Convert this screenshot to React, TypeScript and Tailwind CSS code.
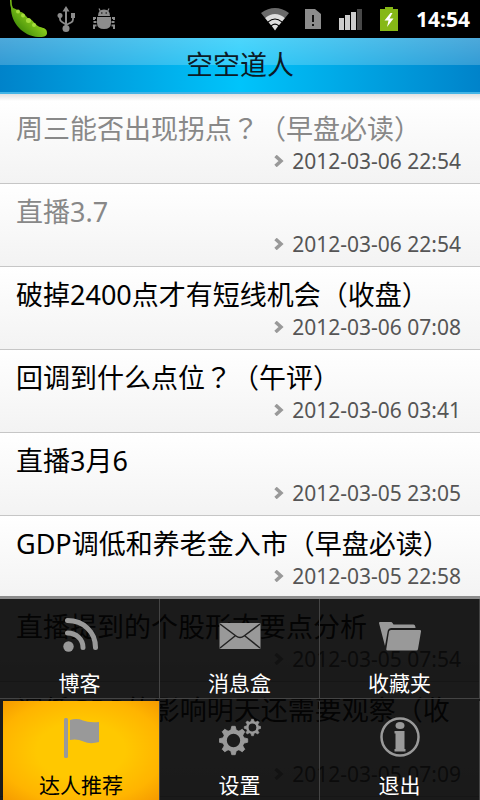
import React from 'react';

interface Post {
  title: string;
  date: string;
  read?: boolean;
}

const POSTS: Post[] = [
  { title: '周三能否出现拐点？（早盘必读）', date: '2012-03-06 22:54', read: true },
  { title: '直播3.7', date: '2012-03-06 22:54', read: true },
  { title: '破掉2400点才有短线机会（收盘）', date: '2012-03-06 07:08' },
  { title: '回调到什么点位？（午评）', date: '2012-03-06 03:41' },
  { title: '直播3月6', date: '2012-03-05 23:05' },
  { title: 'GDP调低和养老金入市（早盘必读）', date: '2012-03-05 22:58' },
  { title: '直播提到的个股形态要点分析', date: '2012-03-05 07:54' },
  { title: '调低GDP的影响明天还需要观察（收盘）', date: '2012-03-05 07:09' },
];

const RssIcon = () => (
  <svg width="42" height="42" viewBox="0 0 42 42" fill="none" stroke="#999" strokeLinecap="round">
    <circle cx="9.500" cy="31.500" r="5.200" fill="#999" stroke="none" />
    <path d="M8.500 18c9 0 15.500 6.500 15.500 14.500" strokeWidth="5" />
    <path d="M8.500 5.500c16 0 28 11.500 28 27" strokeWidth="5" />
  </svg>
);

const MailIcon = () => (
  <svg width="42" height="42" viewBox="0 0 42 42">
    <rect x="0.500" y="8" width="41" height="26" rx="1" fill="#999" />
    <path d="M1 9l16 12q4 3 8 0L41 9M1 33l15-12M41 33L26 21" fill="none" stroke="#222" strokeWidth="1.500" />
  </svg>
);

const FolderIcon = () => (
  <svg width="42" height="42" viewBox="0 0 42 42" fill="#999">
    <path d="M0 8q0-1 1-1h11q1 0 1.500 1l1 1.500h20q1.500 0 1.800 2l.3 1.500H12q-2.500 0-3.200 2.500L6 31Z" />
    <path d="M12 15h29q1.200 0 1 1.500L39 34q-.2 1.500-1.500 1.500H8.500Q7 35.500 7.300 34L10 16.500q.3-1.500 2-1.500Z" />
  </svg>
);

const FlagIcon = () => (
  <svg width="42" height="42" viewBox="0 0 42 42" fill="#999">
    <rect x="4" y="1" width="4" height="40" rx="1.500" />
    <path d="M10 3q7-2 13 .5t16 1.500V25q-9 2.500-15.500-.5T10 23Z" />
  </svg>
);

// 齿轮由圆环加八个齿组成
const Gear = ({ cx, cy, r }: { cx: number; cy: number; r: number }) => (
  <g stroke="#999" fill="none">
    <circle cx={cx} cy={cy} r={r * 0.62} strokeWidth={r * 0.3} />
    {[0, 45, 90, 135, 180, 225, 270, 315].map(a => (
      <path
        key={a}
        d={`M${cx - r * 0.2} ${cy - r * 0.7}L${cx - r * 0.12} ${cy - r}H${cx + r * 0.12}L${cx + r * 0.2} ${cy - r * 0.7}Z`}
        transform={`rotate(${a} ${cx} ${cy})`}
        fill="#999"
        strokeWidth={r * 0.06}
      />
    ))}
  </g>
);

const SettingsIcon = () => (
  <svg width="42" height="42" viewBox="0 0 42 42">
    <Gear cx={14.5} cy={23.5} r={14.2} />
    <Gear cx={33.5} cy={10.5} r={8.3} />
  </svg>
);

const InfoIcon = () => (
  <svg width="42" height="42" viewBox="0 0 42 42" fill="#999">
    <circle cx="21" cy="20" r="18.500" fill="none" stroke="#999" strokeWidth="2.500" />
    <ellipse cx="21" cy="8.500" rx="4.500" ry="3.500" />
    <path d="M15.500 14h10v18h1v2.500h-11V32h1V16.500h-1Z" />
  </svg>
);

const MENU = [
  { label: '博客', icon: <RssIcon /> },
  { label: '消息盒', icon: <MailIcon /> },
  { label: '收藏夹', icon: <FolderIcon /> },
  { label: '达人推荐', icon: <FlagIcon /> },
  { label: '设置', icon: <SettingsIcon /> },
  { label: '退出', icon: <InfoIcon /> },
];

const menuClass = (i: number) => {
  if (i === 3) return 'ml-[3px] border-r border-[#444] bg-[radial-gradient(#ffc800_40%,#ffb400_75%,#f59a00)] text-black';
  if (i < 3) return 'border-r border-b border-[#444] text-white';
  return 'border-r border-[#444] text-white';
};

// 问号用繁体字形，在字框内居中
const Title = ({ text }: { text: string }) => (
  <>
    {text.split(/(？)/).map((part, i) =>
      part === '？' ? (
        <span key={i} className="font-['Noto_Sans_CJK_TC',sans-serif] leading-none">
          {part}
        </span>
      ) : (
        part
      )
    )}
  </>
);

const StatusBar = () => (
  <div className="flex h-[38px] items-center bg-black pr-2.5 pl-2">
    <svg width="40" height="38" viewBox="0 0 40 38">
      <defs>
        <linearGradient id="pea" x1="0" y1="1" x2="1" y2="0">
          <stop offset="0.2" stopColor="#3f8a08" />
          <stop offset="0.6" stopColor="#8fd01c" />
        </linearGradient>
      </defs>
      <path d="M2 0q0 5 1 8c0 15 12 28 27 29 6 .5 9-1 9-4 0-5-4-5-7-6-5-2-6-6-10-8-4-1-5-6-9-7-3-1-4-3-8-4Q3.500 5 3.500 0Z" fill="url(#pea)" />
      <g fill="#a5dc3c">
        <circle cx="10" cy="11.500" r="2" />
        <circle cx="15" cy="15.500" r="2" />
        <circle cx="20.500" cy="20.500" r="2.500" />
        <circle cx="26" cy="25" r="2" />
      </g>
    </svg>
    <svg className="ml-2" width="20" height="28" viewBox="0 0 20 28" fill="#8c8c8c">
      <path d="M10 1l3.500 5.500h-7ZM9 5h2v17H9ZM15 8h4v5h-4Z" />
      <circle cx="4" cy="10.500" r="2.500" />
      <circle cx="10" cy="23.500" r="3.500" />
      <path d="M4 10.500V14q0 2 2 3l4 2.500M17 12v2.500q0 2-2 3L10 20" fill="none" stroke="#8c8c8c" strokeWidth="1.800" />
    </svg>
    <svg className="ml-4" width="24" height="24" viewBox="0 0 24 24" fill="#8c8c8c">
      <path d="M6 9q0-6.500 6-6.500T18 9Z" />
      <path d="M8.500 4.500L7 1.500M15.500 4.500l1.500-3" stroke="#8c8c8c" strokeWidth="1.200" />
      <path d="M5 10h14v6q0 6-7 6t-7-6Z" />
      <path d="M4 11H2v2M4.500 15H1.500M4.500 18.500H2V22M20 11h2v2M19.500 15h3M19.500 18.500H22V22" stroke="#8c8c8c" strokeWidth="2" fill="none" />
      <path d="M9 6h1.500M13.500 6H15" stroke="#000" strokeWidth="1.200" />
    </svg>
    <div className="ml-auto flex items-center">
      <svg width="30" height="24" viewBox="0 0 30 24">
        <path d="M1 6Q15-4 29 6l-4 5Q15 4 5 11Z" fill="#6a6a6a" />
        <path d="M5 11Q15 3 25 11l-2.800 3.500Q15 8.500 7.800 14.500Z" fill="#ddd" />
        <path d="M8.500 15.200Q15 10 21.500 15.200l-2.500 3Q15 15 11 18.200Z" fill="#ddd" />
        <path d="M11.800 19q3.200-2.400 6.400 0L15 23.500Z" fill="#ddd" />
      </svg>
      <svg className="ml-3.5" width="18" height="22" viewBox="0 0 18 22">
        <path d="M1 1h10l6 5v15H1Z" fill="#8c8c8c" />
        <path d="M9 7v7M9 16v2" stroke="#111" strokeWidth="2" />
      </svg>
      <svg className="ml-4" width="26" height="24" viewBox="0 0 26 24">
        <path d="M1 11h5v12H1ZM7 8h5v15H7ZM13 5h5v18h-5Z" fill="#ccc" />
        <path d="M19 2h5v21h-5Z" fill="#484848" />
      </svg>
      <svg className="ml-4" width="18" height="26" viewBox="0 0 18 26">
        <path d="M5 1h8v2h5v22H0V3h5Z" fill="#86b816" />
        <path d="M10.500 7L4.500 14.500h4L7 21l6.500-8.500h-4L12.500 7Z" fill="#fff" />
      </svg>
      <span className="ml-[18px] text-[21px] leading-6 font-bold text-white">14:54</span>
    </div>
  </div>
);

export default function App() {
  return (
    <div className="relative h-screen overflow-hidden bg-[#f4f4f4] font-['Noto_Sans','Noto_Sans_CJK_SC',sans-serif]">
      <StatusBar />

      <header className="flex h-14 items-center justify-center border-b-2 border-[#42b4e6] bg-[linear-gradient(rgba(255,255,255,0.3),rgba(255,255,255,0.2)_50%,transparent_50%),linear-gradient(90deg,#0083ca,#00c4fb_50%,#0083ca)]">
        <h1 className="text-[27px] leading-8 text-[#0c1a26]">空空道人</h1>
      </header>

      <ul className="bg-linear-to-b from-[#e0e0e0] to-white to-[7px] pt-[7px]">
        {POSTS.map(post => (
          <li key={post.title} className="border-b border-[#c6c6c6] bg-linear-to-b from-white to-[#f3f3f3] px-4 pt-3 pb-1.5">
            <a href="#" className="block">
              <h2 className={post.read ? 'text-[27px] leading-8 text-[#888]' : 'text-[27px] leading-8 text-black'}>
                <Title text={post.title} />
              </h2>
              <p className="flex items-center justify-end gap-2 pr-[3px] text-[21px] leading-8 text-[#555]">
                <svg width="10" height="12" viewBox="0 0 10 12" fill="none" stroke="#999" strokeWidth="3.500">
                  <path d="M1.500 1L7 6l-5.500 5" />
                </svg>
                {post.date}
              </p>
            </a>
          </li>
        ))}
      </ul>

      {/* 选项菜单 */}
      <nav className="absolute inset-x-0 bottom-0 grid grid-cols-3 gap-y-0.5 border-t-3 border-[#8c8c8c] bg-[#040404]/91">
        {MENU.map((item, i) => (
          <button key={item.label} className={menuClass(i)}>
            <span className="flex flex-col items-center pt-4">
              {item.icon}
              <span className="mt-[11px] text-[21px] leading-[30px]">{item.label}</span>
            </span>
          </button>
        ))}
      </nav>
    </div>
  );
}
